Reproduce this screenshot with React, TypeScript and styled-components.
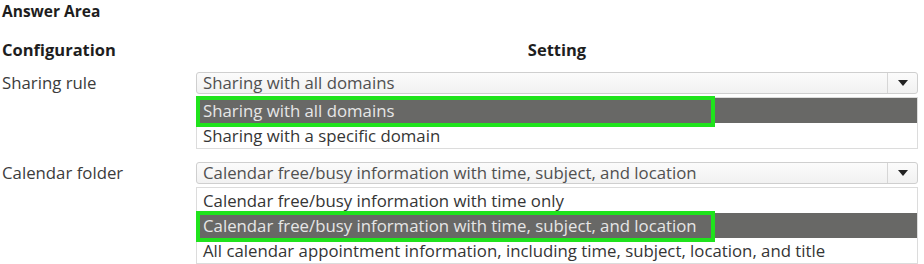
import styled, { createGlobalStyle } from 'styled-components'

const GlobalStyle = createGlobalStyle`
  body {
    margin: 0;
    background: #ffffff;
    font-family: 'Open Sans', 'Noto Sans', sans-serif;
    color: #333333;
  }
`

const StyledPage = styled.div`
  width: 924px;
  height: 264px;
  overflow: hidden;
  padding-left: 2px;
  box-sizing: border-box;
`

const StyledTitle = styled.div`
  padding-top: 2px;
  line-height: 18px;
  font-size: 15.5px;
  font-weight: 700;
  color: #1e1e1e;
`

const StyledGrid = styled.div`
  display: grid;
  grid-template-columns: 194px 722px;
`

const StyledHeader = styled.div<{ center?: boolean }>`
  margin-top: 20px;
  height: 20px;
  line-height: 20px;
  font-size: 16.5px;
  font-weight: 700;
  color: #1e1e1e;
  text-align: ${({ center }) => (center ? 'center' : 'left')};
`

const StyledLabel = styled.div<{ top: number }>`
  margin-top: ${({ top }) => top}px;
  height: 22px;
  line-height: 22px;
  font-size: 16.8px;
  color: #3c3c3c;
`

const StyledSetting = styled.div<{ top: number }>`
  margin-top: ${({ top }) => top}px;
  display: flex;
  flex-direction: column;
  gap: 3px;
`

const StyledSelect = styled.div`
  height: 22px;
  box-sizing: border-box;
  display: flex;
  border: 1px solid #cfcfcf;
  border-radius: 3px;
  background: linear-gradient(#fbfbfb, #f1f1f1);
`

const StyledSelectValue = styled.div`
  flex: 1;
  padding-left: 6px;
  line-height: 20px;
  font-size: 16.8px;
  color: #505050;
  white-space: nowrap;
`

const StyledArrowButton = styled.div`
  width: 29px;
  display: flex;
  align-items: center;
  justify-content: center;
  border-left: 1px solid #d6d6d6;

  &::after {
    content: '';
    border-left: 5px solid transparent;
    border-right: 5px solid transparent;
    border-top: 6px solid #222222;
  }
`

const StyledList = styled.div`
  border: 1px solid #dcdcdc;
  background: #ffffff;
`

const StyledOption = styled.div<{ selected?: boolean }>`
  position: relative;
  height: 25px;
  line-height: 25px;
  padding-left: 6px;
  font-size: 16.8px;
  white-space: nowrap;
  color: ${({ selected }) => (selected ? '#e6e6e6' : '#353535')};
  background: ${({ selected }) => (selected ? '#686866' : 'transparent')};

  ${({ selected }) =>
    selected &&
    `
    &::after {
      content: '';
      position: absolute;
      left: -1px;
      top: -2px;
      width: 519px;
      height: 31px;
      box-sizing: border-box;
      border: 4px solid #1fe31c;
    }
  `}
`

type Setting = {
  label: string
  value: string
  options: string[]
  answer: number
  top: number
}

const settings: Setting[] = [
  {
    label: 'Sharing rule',
    value: 'Sharing with all domains',
    options: ['Sharing with all domains', 'Sharing with a specific domain'],
    answer: 0,
    top: 12,
  },
  {
    label: 'Calendar folder',
    value: 'Calendar free/busy information with time, subject, and location',
    options: [
      'Calendar free/busy information with time only',
      'Calendar free/busy information with time, subject, and location',
      'All calendar appointment information, including time, subject, location, and title',
    ],
    answer: 1,
    top: 13,
  },
]

export default function App() {
  return (
    <StyledPage>
      <GlobalStyle />
      <StyledTitle>Answer Area</StyledTitle>
      <StyledGrid>
        <StyledHeader>Configuration</StyledHeader>
        <StyledHeader center>Setting</StyledHeader>
        {settings.map((setting) => (
          <>
            <StyledLabel key={`${setting.label}-label`} top={setting.top}>
              {setting.label}
            </StyledLabel>
            <StyledSetting key={`${setting.label}-setting`} top={setting.top}>
              <StyledSelect>
                <StyledSelectValue>{setting.value}</StyledSelectValue>
                <StyledArrowButton />
              </StyledSelect>
              <StyledList>
                {setting.options.map((option, i) => (
                  <StyledOption key={option} selected={i === setting.answer}>
                    {option}
                  </StyledOption>
                ))}
              </StyledList>
            </StyledSetting>
          </>
        ))}
      </StyledGrid>
    </StyledPage>
  )
}
